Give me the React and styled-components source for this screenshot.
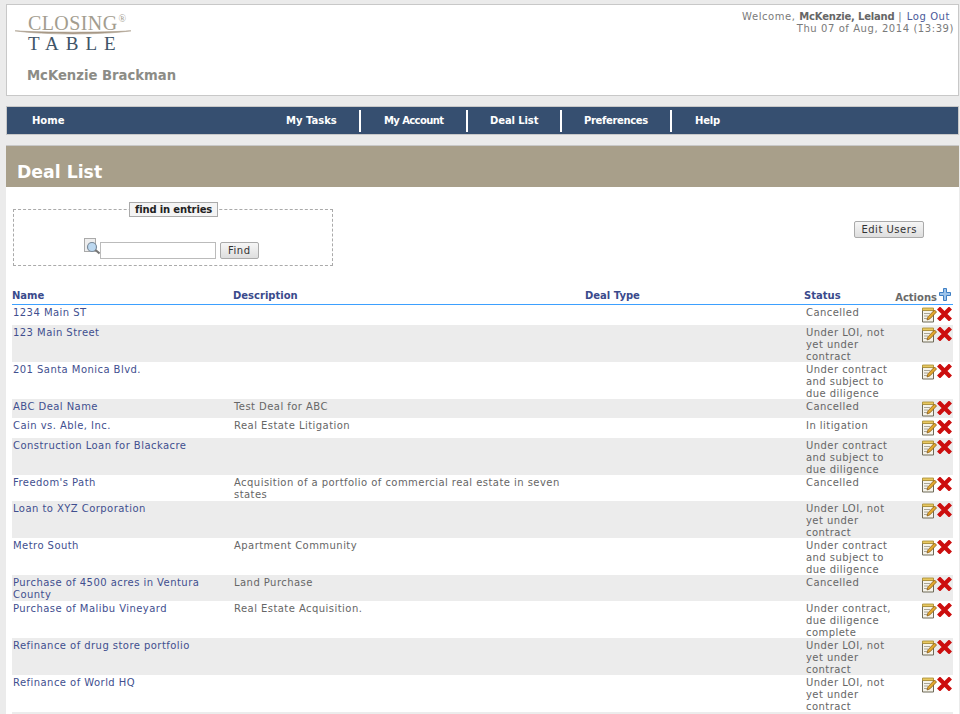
import styled, { createGlobalStyle } from 'styled-components';

const GlobalStyle = createGlobalStyle`
  html, body {
    margin: 0;
    padding: 0;
    background: #ebebeb;
    height: 714px;
    overflow: hidden;
    font-family: "DejaVu Sans", Verdana, sans-serif;
    font-size: 10px;
    color: #666;
  }
`;

const Page = styled.div`
  display: flex;
  flex-direction: column;
  padding: 4px 0 0 6px;
  width: 953px;
`;

// header
const Header = styled.header`
  display: flex;
  justify-content: space-between;
  box-sizing: border-box;
  height: 92px;
  background: #fff;
  border: 1px solid #c8c8c8;
  padding: 9px 4px 0 7px;
`;
const Brand = styled.div`
  display: flex;
  flex-direction: column;
`;
const Logo = styled.div`
  display: flex;
  flex-direction: column;
  width: 118px;
  font-family: "Liberation Serif", serif;
`;
const LogoTop = styled.div`
  font-size: 20px;
  line-height: 19px;
  letter-spacing: 0.4px;
  color: #a39d8f;
  padding-left: 14px;
  white-space: nowrap;
  sup {
    font-size: 10px;
    line-height: 0;
    vertical-align: 8px;
    letter-spacing: 0;
    margin-left: 1px;
  }
`;
const LogoCurve = styled.svg`
  display: block;
  margin-top: -3px;
`;
const LogoBottom = styled.div`
  font-size: 19px;
  line-height: 18px;
  letter-spacing: 7px;
  color: #3f5568;
  padding-left: 14px;
  white-space: nowrap;
`;
const Company = styled.div`
  margin: 15px 0 0 13px;
  font-size: 13.2px;
  line-height: 16px;
  font-weight: bold;
  color: #8c8c86;
`;
const UserInfo = styled.div`
  margin-top: -3px;
  text-align: right;
  line-height: 11.5px;
  font-size: 10px;
  letter-spacing: 0.57px;
  color: #7a7a7a;
  b { color: #666; letter-spacing: -0.2px; }
  a { color: #4a5a9a; margin-left: 1px; }
  span { padding-right: 4px; }
`;

// nav
const Nav = styled.nav`
  display: flex;
  align-items: center;
  box-sizing: border-box;
  height: 29px;
  margin-top: 10px;
  background: #364f70;
  border: 1px solid #c8c8c8;
  padding-left: 25px;
`;
const NavItem = styled.a`
  display: flex;
  align-items: center;
  box-sizing: border-box;
  height: 22px;
  width: ${p => p.$w}px;
  padding-left: ${p => p.$pad || 0}px;
  color: #fff;
  font-size: 10px;
  font-weight: bold;
  letter-spacing: ${p => p.$track || 0}px;
  border-right: ${p => (p.$sep ? '2px solid #fff' : 'none')};
`;

// content
const Panel = styled.main`
  margin-top: 10px;
  background: #fff;
  border-top: 1px solid #c8c8c8;
  height: 569px;
  overflow: hidden;
`;
const Title = styled.h1`
  margin: 0;
  box-sizing: border-box;
  height: 41px;
  background: #a89f8a;
  color: #fff;
  font-size: 17.3px;
  line-height: 20px;
  font-weight: bold;
  padding: 16px 0 0 11px;
`;
const Tools = styled.div`
  display: flex;
  justify-content: space-between;
  align-items: flex-start;
  padding: 22px 35px 0 7px;
  height: 79px;
`;
const SearchBox = styled.div`
  box-sizing: border-box;
  width: 320px;
  height: 57px;
  border: 1px dashed #aaa;
  display: flex;
  position: relative;
`;
const Legend = styled.div`
  position: absolute;
  top: -8px;
  left: 115px;
  box-sizing: border-box;
  height: 15px;
  padding: 0 5px;
  line-height: 13px;
  background: #f4f4f4;
  border: 1px solid #aaa;
  color: #222;
  font-size: 10px;
  font-weight: bold;
  letter-spacing: -0.15px;
`;
const SearchRow = styled.div`
  display: flex;
  align-items: flex-end;
  padding: 0 0 6px 70px;
`;
const SearchInput = styled.div`
  box-sizing: border-box;
  width: 116px;
  height: 17px;
  background: #fff;
  border: 1px solid #bbb;
`;
const Button = styled.button`
  box-sizing: border-box;
  height: 17px;
  padding: 0 ${p => p.$pad}px;
  margin: ${p => p.$margin || 0};
  font-family: "DejaVu Sans", Verdana, sans-serif;
  font-size: 10px;
  line-height: 13px;
  color: #333;
  letter-spacing: 0.5px;
  background: linear-gradient(#f6f6f6, #dedede);
  border: 1px solid #aaa;
  border-radius: 2px;
`;

// table
const Table = styled.table`
  width: 941px;
  margin-left: 6px;
  border-collapse: separate;
  border-spacing: 0;
  table-layout: fixed;
  font-size: 10px;
  line-height: 12px;
`;
const Th = styled.th`
  width: ${p => p.$w}px;
  padding: 0 0 2px 0;
  text-align: left;
  vertical-align: bottom;
  font-size: 10px;
  font-weight: bold;
  color: #3a4a8c;
  border-bottom: 1px solid #3da0ff;
`;
const ActionsHead = styled.div`
  display: flex;
  justify-content: flex-end;
  align-items: flex-end;
  color: #6a6a6a;
  padding-right: 2px;
  margin-bottom: -2px;
`;
const PlusWrap = styled.span`
  display: flex;
  margin: 0 0 3px 2px;
`;
const Row = styled.tr`
  background: ${p => (p.$odd ? '#ececec' : '#fff')};
  height: ${p => p.$h}px;
`;
const Td = styled.td`
  padding: 0 1px 0 ${p => p.$left || 0}px;
  vertical-align: top;
  color: #666;
  letter-spacing: 0.45px;
`;
const CellText = styled.div`
  margin: 2px 0 -1px;
`;
const DealLink = styled.a`
  color: #3f4f8f;
`;
const Actions = styled.div`
  display: flex;
  justify-content: flex-end;
  align-items: flex-start;
  margin-top: 2px;
`;

const EditIcon = () => (
  <svg width="15" height="16" viewBox="0 0 15 16">
    <path d="M.5 3h11v12H.5z" fill="#f5f3ea" stroke="#6f6a58" />
    <path d="M.5 1h11v2.5H.5z" fill="#e8c860" stroke="#a68a30" strokeWidth=".8" />
    <path d="M2 6.5h6M2 9h4M2 11.5h3" stroke="#a9a698" />
    <path d="M5 13l1-3.2L12.5 3l2 2L8 11.8z" fill="#e2a92e" stroke="#8a5a14" strokeWidth=".8" />
  </svg>
);
const DeleteIcon = () => (
  <svg width="15" height="14" viewBox="0 0 15 14">
    <path d="M3 2.5l9 9M12 2.5l-9 9" stroke="#cc0e0e" strokeWidth="4.2" strokeLinecap="square" />
  </svg>
);
const PlusIcon = () => (
  <svg width="12" height="13" viewBox="0 0 12 13">
    <path d="M4.5.5h3v4h4v3h-4v5h-3v-5h-4v-3h4z" fill="#9cc3ea" stroke="#3f7fc4" />
  </svg>
);
const SearchIconSvg = styled.svg`
  margin-bottom: 4px;
`;
const SearchIcon = () => (
  <SearchIconSvg width="16" height="17" viewBox="0 0 16 17">
    <rect x=".5" y=".5" width="11" height="13" fill="#eee" stroke="#aaa" />
    <circle cx="8" cy="9" r="4.5" fill="#bcd8f0" stroke="#7a8a9a" strokeWidth="1.2" />
    <path d="M11.5 12l4 3.5" stroke="#777" strokeWidth="2" />
  </SearchIconSvg>
);

const deals = [
  { name: '1234 Main ST', status: 'Cancelled', h: 20 },
  { name: '123 Main Street', status: 'Under LOI, not yet under contract', h: 37 },
  { name: '201 Santa Monica Blvd.', status: 'Under contract and subject to due diligence', h: 37 },
  { name: 'ABC Deal Name', desc: 'Test Deal for ABC', status: 'Cancelled', h: 19 },
  { name: 'Cain vs. Able, Inc.', desc: 'Real Estate Litigation', status: 'In litigation', h: 20 },
  { name: 'Construction Loan for Blackacre', status: 'Under contract and subject to due diligence', h: 37 },
  { name: "Freedom's Path", desc: 'Acquisition of a portfolio of commercial real estate in seven states', status: 'Cancelled', h: 26 },
  { name: 'Loan to XYZ Corporation', status: 'Under LOI, not yet under contract', h: 37 },
  { name: 'Metro South', desc: 'Apartment Community', status: 'Under contract and subject to due diligence', h: 37 },
  { name: 'Purchase of 4500 acres in Ventura County', desc: 'Land Purchase', status: 'Cancelled', h: 26 },
  { name: 'Purchase of Malibu Vineyard', desc: 'Real Estate Acquisition.', status: 'Under contract, due diligence complete', h: 37 },
  { name: 'Refinance of drug store portfolio', status: 'Under LOI, not yet under contract', h: 37 },
  { name: 'Refinance of World HQ', status: 'Under LOI, not yet under contract', h: 37 },
  { name: '', status: '', h: 20, blank: true },
];

const App = () => (
  <Page>
    <GlobalStyle />
    <Header>
      <Brand>
        <Logo>
          <LogoTop>CLOSING<sup>®</sup></LogoTop>
          <LogoCurve width="118" height="5" viewBox="0 0 118 5">
            <path d="M1 .8C30 5 88 5 117 .8C88 2.6 30 2.6 1 .8z" fill="#a08f7c" stroke="#b5a999" strokeWidth=".7" />
          </LogoCurve>
          <LogoBottom>TABLE</LogoBottom>
        </Logo>
        <Company>McKenzie Brackman</Company>
      </Brand>
      <UserInfo>
        <div>
          <span>Welcome, <b>McKenzie, Leland</b> | <a>Log Out</a></span>
        </div>
        <div>Thu 07 of Aug, 2014 (13:39)</div>
      </UserInfo>
    </Header>

    <Nav>
      <NavItem $w={254}>Home</NavItem>
      <NavItem $w={75} $sep>My Tasks</NavItem>
      <NavItem $w={107} $pad={23} $track={-0.6} $sep>My Account</NavItem>
      <NavItem $w={94} $pad={22} $track={-0.1} $sep>Deal List</NavItem>
      <NavItem $w={110} $pad={22} $track={-0.35} $sep>Preferences</NavItem>
      <NavItem $w={70} $pad={23} $track={-0.2}>Help</NavItem>
    </Nav>

    <Panel>
      <Title>Deal List</Title>
      <Tools>
        <SearchBox>
          <Legend>find in entries</Legend>
          <SearchRow>
            <SearchIcon />
            <SearchInput />
            <Button $pad={7} $margin="0 0 0 4px">Find</Button>
          </SearchRow>
        </SearchBox>
        <Button $pad={6} $margin="12px 0 0 0">Edit Users</Button>
      </Tools>
      <Table>
        <thead>
          <tr>
            <Th $w={221}>Name</Th>
            <Th $w={352}>Description</Th>
            <Th $w={219}>Deal Type</Th>
            <Th $w={89}>Status</Th>
            <Th>
              <ActionsHead>Actions<PlusWrap><PlusIcon /></PlusWrap></ActionsHead>
            </Th>
          </tr>
        </thead>
        <tbody>
          {deals.map((d, i) => (
            <Row key={i} $odd={i % 2 === 1} $h={d.h}>
              <Td $left={1}><CellText><DealLink>{d.name}</DealLink></CellText></Td>
              <Td $left={1}><CellText>{d.desc}</CellText></Td>
              <Td />
              <Td $left={2}><CellText>{d.status}</CellText></Td>
              <Td>{!d.blank && <Actions><EditIcon /><DeleteIcon /></Actions>}</Td>
            </Row>
          ))}
        </tbody>
      </Table>
    </Panel>
  </Page>
);

export default App;
